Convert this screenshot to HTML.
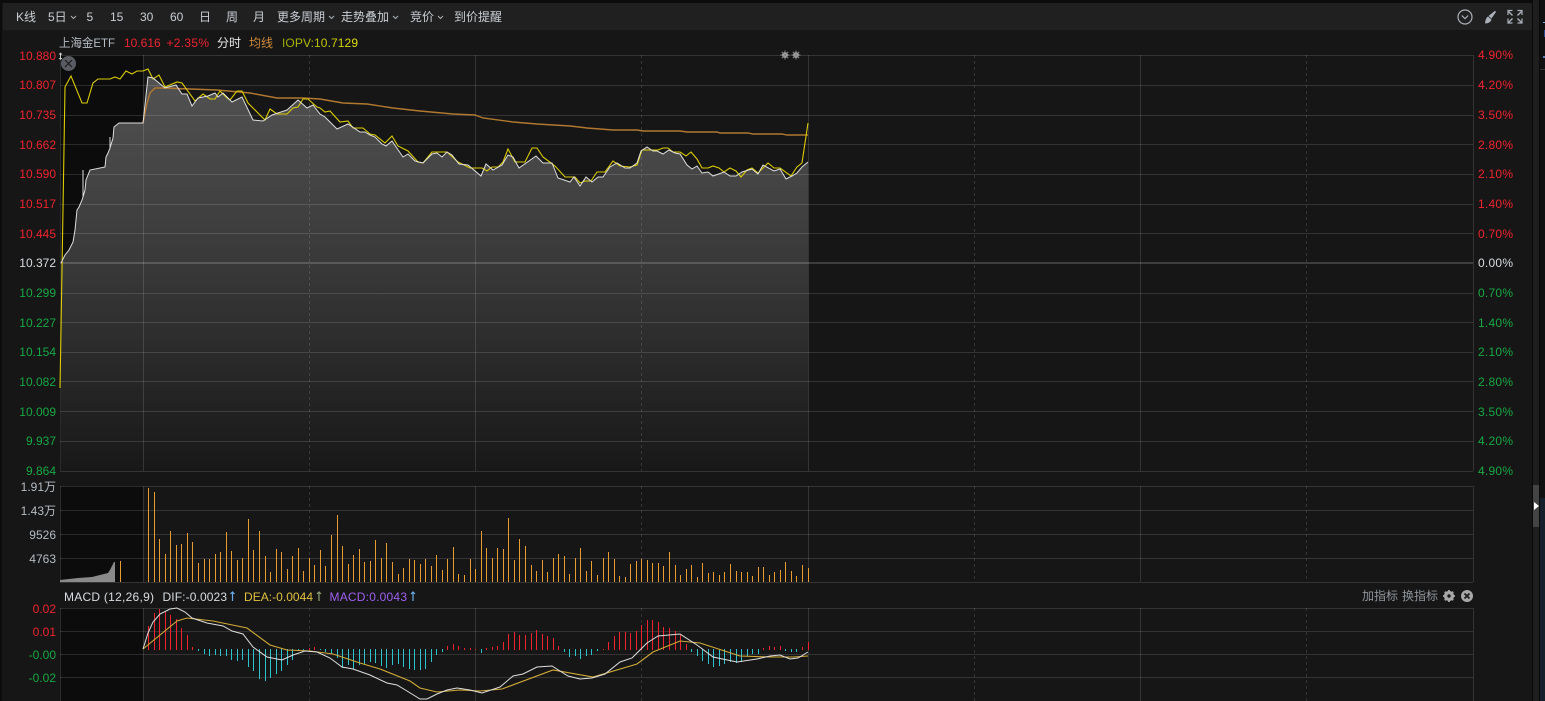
<!DOCTYPE html>
<html>
<head>
<meta charset="utf-8">
<style>
html,body{margin:0;padding:0;background:#161616;width:1545px;height:701px;overflow:hidden}
svg{position:absolute;left:0;top:0;display:block}
text{font-family:"Liberation Sans","Noto Sans CJK SC",sans-serif;font-size:12px}
.t text{fill:#c9ced4}
.l text{text-anchor:end}
.r{fill:#f0232f}
.g{fill:#17a844}
.w{fill:#d8dde2}
.b{fill:#b5bcc4}
</style>
</head>
<body>
<svg width="1545" height="701" viewBox="0 0 1545 701" xmlns="http://www.w3.org/2000/svg">
<defs>
<linearGradient id="af" gradientUnits="userSpaceOnUse" x1="0" y1="77" x2="0" y2="471">
<stop offset="0" stop-color="#525252"/>
<stop offset="0.47" stop-color="#393939"/>
<stop offset="1" stop-color="#181818"/>
</linearGradient>
<linearGradient id="io" x1="0" x2="1" y1="0" y2="0">
<stop offset="0" stop-color="#9aa800"/>
<stop offset="1" stop-color="#e0e000"/>
</linearGradient>
</defs>

<rect width="1545" height="701" fill="#161616"/>
<!-- toolbar -->
<rect x="3" y="3" width="1529" height="27" fill="#202020"/>
<rect x="0" y="0" width="1532" height="3" fill="#0c0c0c"/>
<rect x="0" y="0" width="2" height="701" fill="#0c0c0c"/>
<!-- right strip -->
<rect x="1532" y="0" width="13" height="701" fill="#0a0a0a"/>
<rect x="1533" y="0" width="6" height="701" fill="#1e1e1e"/>
<rect x="1533" y="485" width="6" height="42" fill="#444"/>
<rect x="1540" y="0" width="5" height="69" fill="#111"/>
<rect x="1540" y="70" width="5" height="428" fill="#111"/>
<rect x="1540" y="498" width="5" height="203" fill="#15202a"/>
<rect x="1540" y="69" width="5" height="1" fill="#333"/>
<rect x="1543" y="22" width="2" height="1" fill="#7aa6d8"/>
<rect x="1544" y="30" width="1" height="7" fill="#2a4a90"/>
<rect x="1543" y="56" width="2" height="2" fill="#5a7ab0"/>
<path d="M1534 502v8l5-4z" fill="#fff"/>

<!-- dark region (only inside the three panes) -->
<rect x="60" y="55" width="83" height="416" fill="#0c0c0c"/>
<rect x="60" y="486" width="83" height="96" fill="#0c0c0c"/>
<rect x="60" y="608" width="83" height="93" fill="#0c0c0c"/>

<!-- price area -->
<path fill="url(#af)" d="M61 471V263L65 255 69 250 73 242 75 230 77 210 79 207 82 200 83 197 85 190 86 180 90 170 105 167 106 157 108 153 110 148 113 138 114 127 119 123 143 123 148 77 153 78 165 88 176 85 182 94 187 94 192 106 198 98 208 96 215 93 218 97 223 93 232 102 242 97 253 120 263 121 272 115 287 110 298 100 307 108 313 105 320 114 325 117 337 129 348 124 360 132 365 132 370 135 375 137 382 144 386 146 392 141 403 157 408 154 415 161 423 163 432 154 437 153 442 157 447 152 452 155 459 164 468 165 481 176 486 164 493 170 502 165 508 155 513 157 519 168 536 156 543 163 552 163 558 178 570 182 574 177 580 186 586 177 592 182 598 177 603 177 610 167 617 163 625 168 630 168 637 163 641 151 647 147 653 151 657 151 663 154 669 150 675 153 680 154 687 165 692 169 697 166 702 173 708 172 713 176 724 172 730 176 736 176 742 172 752 169 758 174 763 165 774 171 780 169 786 179 792 176 797 173 802 167 808 162V471Z"/>

<!-- grid horizontal -->
<g stroke="#fff" stroke-opacity=".13" stroke-width="1" fill="none" shape-rendering="crispEdges">
<path d="M60 55.5H1473M60 85.5H1473M60 115.5H1473M60 144.5H1473M60 174.5H1473M60 204.5H1473M60 233.5H1473M60 293.5H1473M60 322.5H1473M60 352.5H1473M60 381.5H1473M60 411.5H1473M60 441.5H1473M60 471.5H1473"/>
<path d="M60 486.5H1473M60 510.5H1473M60 534.5H1473M60 558.5H1473M60 582.5H1473"/>
<path d="M60 608.5H1473M60 631.5H1473M60 654.5H1473M60 677.5H1473"/>
<path d="M60.5 55V471M143.5 55V471M475.5 55V471M808.5 55V471M1140.5 55V471M1473.5 55V471"/>
<path d="M60.5 486V582M143.5 486V582M475.5 486V582M808.5 486V582M1140.5 486V582M1473.5 486V582"/>
<path d="M60.5 608V701M143.5 608V701M475.5 608V701M808.5 608V701M1140.5 608V701M1473.5 608V701"/>
<path stroke-dasharray="3 3" d="M309.5 55V471M641.5 55V471M974.5 55V471M1306.5 55V471M309.5 486V582M641.5 486V582M974.5 486V582M1306.5 486V582M309.5 608V701M641.5 608V701M974.5 608V701M1306.5 608V701"/>
</g>
<rect x="60" y="262" width="1413" height="2" fill="#fff" fill-opacity=".17"/>

<!-- lines -->
<path fill="none" stroke="#b07830" stroke-width="1.4" d="M143 123L147 103 150 93 155 88 163 88 190 89 217 90 250 93 277 98 303 98 320 99 343 103 367 104 393 108 420 111 453 114 475 115 483 118 513 122 537 124 570 126 587 128 613 130 637 130 643 131 680 131 687 132 717 132 720 133 748 133 753 134 782 134 787 135 808 135"/>
<path fill="none" stroke="#dccc00" stroke-width="1.1" d="M60 388L62 270 65 87 71 76 82 103 87 103 93 83 98 79 110 79 115 77 120 79 126 71 132 74 137 71 143 71 148 69 153 79 159 75 165 87 177 82 182 83 195 101 203 94 210 99 215 99 220 91 227 98 230 100 237 91 242 91 248 103 265 120 270 109 277 114 287 114 293 108 298 107 303 99 308 99 317 107 320 108 325 112 330 111 340 122 348 121 353 128 363 128 370 134 375 135 385 143 392 136 398 146 408 151 418 162 423 163 432 152 447 152 458 162 470 168 482 168 487 171 492 167 498 167 503 162 508 149 515 162 525 162 532 148 537 148 543 157 555 166 565 177 575 177 580 183 585 181 591 181 597 172 605 172 613 161 620 166 630 167 637 165 642 150 658 150 663 148 668 148 673 152 680 152 686 156 691 152 697 159 702 168 708 168 713 166 719 168 724 172 730 168 736 171 741 177 747 170 752 168 758 173 768 163 774 168 780 168 791 176 797 167 802 163 808 123"/>
<path fill="none" stroke="#dedede" stroke-width="1" d="M61 263L65 255 69 250 73 242 75 230 77 210 79 207 82 200 83 197 83 170 83 197 85 190 86 180 90 170 105 167 106 157 108 153 110 148 110 137 110 148 113 138 114 127 119 123 143 123 148 77 153 78 165 88 176 85 182 94 187 94 192 106 198 98 208 96 215 93 218 97 223 93 232 102 242 97 253 120 263 121 272 115 287 110 298 100 307 108 313 105 320 114 325 117 337 129 348 124 360 132 365 132 370 135 375 137 382 144 386 146 392 141 403 157 408 154 415 161 423 163 432 154 437 153 442 157 447 152 452 155 459 164 468 165 481 176 486 164 493 170 502 165 508 155 513 157 519 168 536 156 543 163 552 163 558 178 570 182 574 177 580 186 586 177 592 182 598 177 603 177 610 167 617 163 625 168 630 168 637 163 641 151 647 147 653 151 657 151 663 154 669 150 675 153 680 154 687 165 692 169 697 166 702 173 708 172 713 176 724 172 730 176 736 176 742 172 752 169 758 174 763 165 774 171 780 169 786 179 792 176 797 173 802 167 808 162"/>

<!-- volume -->
<path fill="#8a8a8a" d="M60 582V580L78 578 92 577 100 575 108 573 110 570 112 566 114 562 115 562V582Z"/>
<path fill="none" stroke="#e89c30" stroke-width="1" shape-rendering="crispEdges" d="M120.500 582V561M148.500 582V488M154.500 582V492M159.500 582V539M165.500 582V554M170.500 582V531M176.500 582V545M181.500 582V544M187.500 582V533M192.500 582V542M198.500 582V563M204.500 582V559M209.500 582V559M215.500 582V554M220.500 582V552M226.500 582V532M231.500 582V551M237.500 582V560M242.500 582V558M248.500 582V519M253.500 582V550M259.500 582V531M265.500 582V556M270.500 582V572M276.500 582V549M281.500 582V552M287.500 582V569M292.500 582V556M298.500 582V548M303.500 582V571M309.500 582V558M314.500 582V565M320.500 582V550M325.500 582V566M331.500 582V535M337.500 582V515M342.500 582V546M348.500 582V564M353.500 582V555M359.500 582V549M364.500 582V562M370.500 582V561M375.500 582V540M381.500 582V558M386.500 582V543M392.500 582V562M398.500 582V574M403.500 582V568M409.500 582V559M414.500 582V560M420.500 582V564M425.500 582V559M431.500 582V566M436.500 582V555M442.500 582V570M447.500 582V559M453.500 582V547M458.500 582V574M464.500 582V575M470.500 582V559M475.500 582V569M481.500 582V531M486.500 582V548M492.500 582V558M497.500 582V548M503.500 582V549M508.500 582V518M514.500 582V560M519.500 582V539M525.500 582V546M531.500 582V565M536.500 582V571M542.500 582V560M547.500 582V572M553.500 582V558M558.500 582V554M564.500 582V556M569.500 582V574M575.500 582V558M580.500 582V548M586.500 582V571M591.500 582V561M597.500 582V575M603.500 582V558M608.500 582V552M614.500 582V559M619.500 582V576M625.500 582V577M630.500 582V564M636.500 582V561M641.500 582V559M647.500 582V560M652.500 582V563M658.500 582V563M663.500 582V566M669.500 582V552M675.500 582V565M680.500 582V575M686.500 582V569M691.500 582V565M697.500 582V577M702.500 582V563M708.500 582V573M713.500 582V572M719.500 582V575M724.500 582V572M730.500 582V564M736.500 582V571M741.500 582V572M747.500 582V572M752.500 582V576M758.500 582V567M763.500 582V567M769.500 582V575M774.500 582V572M780.500 582V570M785.500 582V562M791.500 582V571M796.500 582V576M802.500 582V565M808.500 582V568"/>

<!-- MACD histogram -->
<path fill="none" stroke="#f0232f" stroke-width="1" shape-rendering="crispEdges" d="M148.500 650V626M154.500 650V613M159.500 650V609M165.500 650V612M170.500 650V615M176.500 650V619M181.500 650V628M187.500 650V635M192.500 650V647M309.500 650V648M314.500 650V647M447.500 650V646M453.500 650V644M458.500 650V646M464.500 650V648M470.500 650V648M475.500 650V649M486.500 650V648M492.500 650V647M497.500 650V646M503.500 650V642M508.500 650V634M514.500 650V632M519.500 650V635M525.500 650V635M531.500 650V633M536.500 650V630M542.500 650V634M547.500 650V636M553.500 650V638M558.500 650V646M603.500 650V649M608.500 650V642M614.500 650V636M619.500 650V632M625.500 650V632M630.500 650V633M636.500 650V631M641.500 650V625M647.500 650V620M652.500 650V620M658.500 650V622M663.500 650V627M669.500 650V628M675.500 650V631M680.500 650V635M686.500 650V644M763.500 650V648M769.500 650V646M774.500 650V647M780.500 650V646M802.500 650V647M808.500 650V642"/>
<path fill="none" stroke="#2cc4cc" stroke-width="1" shape-rendering="crispEdges" d="M198.500 649V651M204.500 649V654M209.500 649V656M215.500 649V655M220.500 649V656M226.500 649V656M231.500 649V660M237.500 649V661M242.500 649V660M248.500 649V667M253.500 649V671M259.500 649V679M265.500 649V681M270.500 649V678M276.500 649V674M281.500 649V671M287.500 649V665M292.500 649V660M298.500 649V650M303.500 649V650M320.500 649V650M325.500 649V652M331.500 649V654M337.500 649V658M342.500 649V668M348.500 649V665M353.500 649V669M359.500 649V665M364.500 649V664M370.500 649V662M375.500 649V663M381.500 649V666M386.500 649V668M392.500 649V665M398.500 649V664M403.500 649V667M409.500 649V669M414.500 649V670M420.500 649V670M425.500 649V669M431.500 649V662M436.500 649V655M442.500 649V652M481.500 649V653M564.500 649V652M569.500 649V657M575.500 649V656M580.500 649V659M586.500 649V656M591.500 649V655M597.500 649V651M691.500 649V652M697.500 649V656M702.500 649V661M708.500 649V664M713.500 649V667M719.500 649V666M724.500 649V664M730.500 649V662M736.500 649V663M741.500 649V662M747.500 649V656M752.500 649V654M758.500 649V654M785.500 649V651M791.500 649V652M796.500 649V652"/>
<path fill="none" stroke="#d0aa38" stroke-width="1.1" d="M143 649L160 635 177 621 187 618 213 621 247 628 270 645 287 650 310 651 333 654 360 663 380 669 410 681 420 688 437 692 460 690 480 691 502 689 553 670 593 677 637 664 653 652 680 641 700 643 740 656 770 657 793 657 808 656"/>
<path fill="none" stroke="#dedede" stroke-width="1" d="M143 649L148 633 153 622 160 614 170 609 177 608 185 612 192 618 207 623 223 626 232 631 243 634 253 647 267 657 282 660 293 655 305 651 317 652 330 658 342 667 353 669 370 675 387 683 397 685 407 691 420 699 427 699 437 694 447 690 457 688 470 690 482 693 500 687 513 676 523 674 537 667 552 666 568 676 580 679 592 678 605 674 620 662 632 658 647 643 658 636 680 634 697 645 713 657 737 662 757 659 770 656 780 655 790 659 798 658 808 652"/>

<!-- stars -->
<g fill="#cfcfcf"><circle cx="785" cy="55" r="2.800"/><circle cx="796" cy="55" r="2.800"/></g>
<path stroke="#8a8a8a" stroke-width="1" fill="none" d="M785 50.500v9M780.500 55h9M781.800 51.800l6.400 6.400M788.200 51.800l-6.400 6.400M796 50.500v9M791.500 55h9M792.800 51.800l6.400 6.400M799.200 51.800l-6.400 6.400"/>

<!-- toolbar text -->
<g class="t">
<text x="16" y="21">K线</text>
<text x="48" y="21">5日</text>
<text x="86.500" y="21">5</text>
<text x="110" y="21">15</text>
<text x="140" y="21">30</text>
<text x="170" y="21">60</text>
<text x="199" y="21">日</text>
<text x="226" y="21">周</text>
<text x="253" y="21">月</text>
<text x="277" y="21">更多周期</text>
<text x="341" y="21">走势叠加</text>
<text x="410" y="21">竞价</text>
<text x="454" y="21">到价提醒</text>
</g>
<g fill="none" stroke="#aab0b6" stroke-width="1">
<path d="M71 16l2.500 2.500 2.500-2.500M329 16l2.500 2.500 2.500-2.500M393 16l2.500 2.500 2.500-2.500M438 16l2.500 2.500 2.500-2.500"/>
</g>

<!-- toolbar icons -->
<g fill="none" stroke="#aab0b8" stroke-width="1.200">
<circle cx="1465" cy="17" r="7"/>
<path d="M1461.800 15.500l3.200 3.200 3.200-3.200"/>
</g>
<path fill="#aab0b8" d="M1495 10.800l1 1.200-4.500 6.500-3-2.500zM1488 16.500l3.500 3c-.5 2.500-3.500 4-6.500 4 .5-2.500.5-5.500 3-7z"/>
<g fill="none" stroke="#aab0b8" stroke-width="1.400">
<path d="M1508.500 11.500l4 4M1521.500 11.500l-4 4M1508.500 22.500l4-4M1521.500 22.500l-4-4"/>
<path d="M1508 15v-4.500h4.500M1522 15v-4.500h-4.500M1508 18.500v4.500h4.500M1522 18.500v4.500h-4.500" stroke-width="1.200"/>
</g>

<!-- header legend -->
<text x="59" y="47" class="b" textLength="56" lengthAdjust="spacingAndGlyphs">上海金ETF</text>
<text x="124" y="47" class="r">10.616</text>
<text x="166.500" y="47" class="r" textLength="42.500">+2.35%</text>
<text x="217" y="47" fill="#e8e8e8">分时</text>
<text x="249" y="47" fill="#d08a3a">均线</text>
<text x="282" y="47" fill="url(#io)" textLength="76">IOPV:10.7129</text>

<!-- close & resize near top-left -->
<circle cx="68.500" cy="63.500" r="7.500" fill="#5a5e64"/>
<path d="M65 60l7 7M72 60l-7 7" stroke="#1a1a1a" stroke-width="1.200"/>
<path d="M60.500 52.500l-2 2h4zM60.500 60l-2-2h4z" fill="#d0d0d0"/><rect x="60" y="54" width="1" height="4" fill="#d0d0d0"/>

<!-- left price axis -->
<g class="l">
<text x="56" y="60" class="r">10.880</text>
<text x="56" y="89" class="r">10.807</text>
<text x="56" y="119" class="r">10.735</text>
<text x="56" y="149" class="r">10.662</text>
<text x="56" y="178" class="r">10.590</text>
<text x="56" y="208" class="r">10.517</text>
<text x="56" y="238" class="r">10.445</text>
<text x="56" y="267" class="w">10.372</text>
<text x="56" y="297" class="g">10.299</text>
<text x="56" y="327" class="g">10.227</text>
<text x="56" y="356" class="g">10.154</text>
<text x="56" y="386" class="g">10.082</text>
<text x="56" y="416" class="g">10.009</text>
<text x="56" y="445" class="g">9.937</text>
<text x="56" y="475" class="g">9.864</text>
<text x="56" y="491" class="b">1.91万</text>
<text x="56" y="515" class="b">1.43万</text>
<text x="56" y="539" class="b">9526</text>
<text x="56" y="563" class="b">4763</text>
<text x="56" y="613" class="r">0.02</text>
<text x="56" y="636" class="r">0.01</text>
<text x="56" y="659" class="g">-0.00</text>
<text x="56" y="682" class="g">-0.02</text>
</g>

<!-- right axis -->
<g>
<text x="1478" y="59" class="r" textLength="35">4.90%</text>
<text x="1478" y="89" class="r" textLength="35">4.20%</text>
<text x="1478" y="119" class="r" textLength="35">3.50%</text>
<text x="1478" y="149" class="r" textLength="35">2.80%</text>
<text x="1478" y="178" class="r" textLength="35">2.10%</text>
<text x="1478" y="208" class="r" textLength="35">1.40%</text>
<text x="1478" y="238" class="r" textLength="35">0.70%</text>
<text x="1478" y="267" class="w" textLength="35">0.00%</text>
<text x="1478" y="297" class="g" textLength="35">0.70%</text>
<text x="1478" y="327" class="g" textLength="35">1.40%</text>
<text x="1478" y="356" class="g" textLength="35">2.10%</text>
<text x="1478" y="386" class="g" textLength="35">2.80%</text>
<text x="1478" y="416" class="g" textLength="35">3.50%</text>
<text x="1478" y="445" class="g" textLength="35">4.20%</text>
<text x="1478" y="475" class="g" textLength="35">4.90%</text>
</g>

<!-- MACD legend -->
<text x="64" y="601" class="w" textLength="90">MACD (12,26,9)</text>
<text x="162.500" y="601" class="w" textLength="64.500">DIF:-0.0023</text>
<path d="M232.500 601v-9M230.500 594l2-2 2 2" stroke="#6aa8e8" fill="none" stroke-width="1.200"/>
<text x="244" y="601" fill="#e0c040" textLength="69">DEA:-0.0044</text>
<path d="M319 601v-9M317 594l2-2 2 2" stroke="#8aa070" fill="none" stroke-width="1.200"/>
<text x="329.500" y="601" fill="#a060f0" textLength="77.500">MACD:0.0043</text>
<path d="M413 601v-9M411 594l2-2 2 2" stroke="#6aa8e8" fill="none" stroke-width="1.200"/>

<text x="1362" y="600" fill="#8e959c">加指标</text>
<text x="1402" y="600" fill="#8e959c">换指标</text>
<circle cx="1449" cy="596" r="3.800" fill="none" stroke="#a8a8a8" stroke-width="2.600"/>
<path d="M1449 590v12M1443 596h12M1444.800 591.800l8.400 8.400M1453.200 591.800l-8.400 8.400" stroke="#a8a8a8" stroke-width="1.800"/>
<circle cx="1449" cy="596" r="1.700" fill="#181818"/>
<circle cx="1467" cy="596" r="6" fill="#a8a8a8"/>
<path d="M1464.500 593.500l5 5M1469.500 593.500l-5 5" stroke="#1c1c1c" stroke-width="1.800"/>
</svg>
</body>
</html>
